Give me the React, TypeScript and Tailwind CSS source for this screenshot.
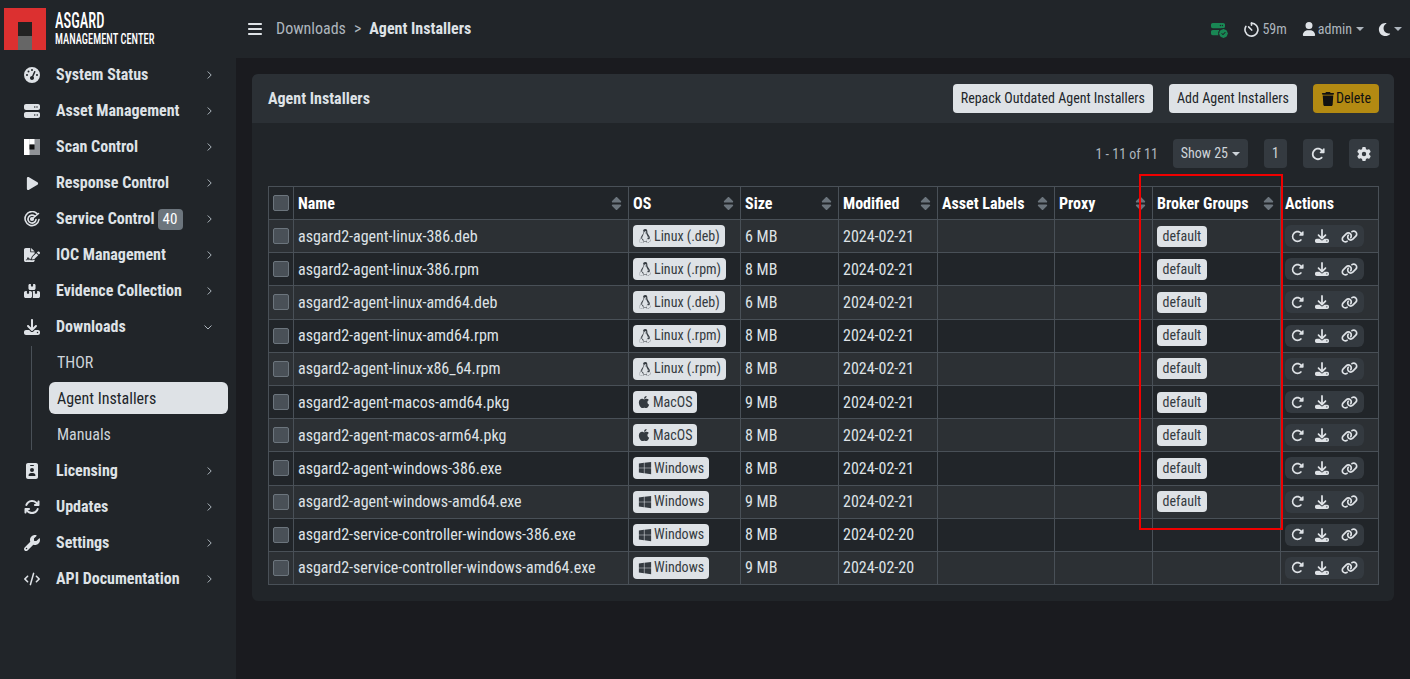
import React from "react";
import {
  FaGaugeHigh, FaServer, FaPlay, FaFileSignature, FaBoxesStacked, FaDownload, FaIdBadge,
  FaArrowsRotate, FaWrench, FaCode, FaRotateRight, FaLink, FaLinux, FaApple, FaWindows,
  FaUser, FaMoon, FaTrash, FaGear, FaBars, FaSort, FaCircleCheck,
} from "react-icons/fa6";

const font = { fontFamily: "Roboto, sans-serif" };

function ScanIcon() {
  return (
    <svg width="16" height="16" viewBox="0 0 16 16">
      <rect width="16" height="16" fill="#8f9296" />
      <rect width="5.5" height="16" fill="#fff" />
      <rect x="5.5" width="5" height="5.5" fill="#fff" />
      <rect x="5.5" y="5.5" width="5" height="5" fill="#111" />
    </svg>
  );
}

function RadarIcon() {
  return (
    <svg width="16" height="16" viewBox="0 0 16 16" fill="none" stroke="currentColor" strokeWidth="1.6" strokeLinecap="round">
      <path d="M13 2.6A7 7 0 1 0 15 8.5" />
      <path d="M10.8 5.2A4 4 0 1 0 12 8.6" />
      <circle cx="8" cy="8" r="1.3" fill="currentColor" />
      <path d="M8 8l6.5-5.5" />
    </svg>
  );
}

function TimerIcon() {
  return (
    <svg width="15" height="15" viewBox="0 0 16 16" fill="none" stroke="currentColor" strokeWidth="1.7" strokeLinecap="round" strokeLinejoin="round">
      <path d="M8 1.2A6.9 6.9 0 1 1 2 4.6" />
      <path d="M8 1.2V3.4" />
      <path d="M8.2 8.6 4.9 5.2" />
    </svg>
  );
}

function Chevron({ open }: { open?: boolean }) {
  if (open) {
    return (
      <svg width="8" height="5" viewBox="0 0 8 5" fill="none" stroke="currentColor" strokeWidth="1">
        <path d="M.5.5 4 4 7.5.5" />
      </svg>
    );
  }
  return (
    <svg width="5" height="8" viewBox="0 0 5 8" fill="none" stroke="currentColor" strokeWidth="1">
      <path d="M.7.5 4.2 4 .7 7.5" />
    </svg>
  );
}

const navTop = [
  { label: "System Status", icon: <FaGaugeHigh size={16} /> },
  { label: "Asset Management", icon: <FaServer size={16} /> },
  { label: "Scan Control", icon: <ScanIcon /> },
  { label: "Response Control", icon: <FaPlay size={15} /> },
  { label: "Service Control", icon: <RadarIcon />, badge: "40" },
  { label: "IOC Management", icon: <FaFileSignature size={18} /> },
  { label: "Evidence Collection", icon: <FaBoxesStacked size={18} /> },
];

const navBottom = [
  { label: "Licensing", icon: <FaIdBadge size={16} /> },
  { label: "Updates", icon: <FaArrowsRotate size={16} /> },
  { label: "Settings", icon: <FaWrench size={16} /> },
  { label: "API Documentation", icon: <FaCode size={20} /> },
];

const rows = [
  ["asgard2-agent-linux-386.deb", "linux", "Linux (.deb)", "6 MB", "2024-02-21", true],
  ["asgard2-agent-linux-386.rpm", "linux", "Linux (.rpm)", "8 MB", "2024-02-21", true],
  ["asgard2-agent-linux-amd64.deb", "linux", "Linux (.deb)", "6 MB", "2024-02-21", true],
  ["asgard2-agent-linux-amd64.rpm", "linux", "Linux (.rpm)", "8 MB", "2024-02-21", true],
  ["asgard2-agent-linux-x86_64.rpm", "linux", "Linux (.rpm)", "8 MB", "2024-02-21", true],
  ["asgard2-agent-macos-amd64.pkg", "mac", "MacOS", "9 MB", "2024-02-21", true],
  ["asgard2-agent-macos-arm64.pkg", "mac", "MacOS", "8 MB", "2024-02-21", true],
  ["asgard2-agent-windows-386.exe", "win", "Windows", "8 MB", "2024-02-21", true],
  ["asgard2-agent-windows-amd64.exe", "win", "Windows", "9 MB", "2024-02-21", true],
  ["asgard2-service-controller-windows-386.exe", "win", "Windows", "8 MB", "2024-02-20", false],
  ["asgard2-service-controller-windows-amd64.exe", "win", "Windows", "9 MB", "2024-02-20", false],
] as const;

function NavItem({ label, icon, badge, open }: { label: string; icon: React.ReactNode; badge?: string; open?: boolean }) {
  return (
    <div className="flex h-9 items-center pl-[24px] pr-[24px] text-[#dee2e6]">
      <span className="flex w-[16px] justify-center">{icon}</span>
      <span className="ml-[16px] text-[16px] font-bold whitespace-nowrap [font-stretch:75%]">{label}</span>
      {badge && <span className="ml-[3px] w-[25px] rounded-[4px] bg-[#6c757d] text-center text-[15px] leading-[21px] [font-stretch:75%] text-white">{badge}</span>}
      <span className="ml-auto text-[#adb5bd]">
        <Chevron open={open} />
      </span>
    </div>
  );
}

function OsIcon({ os }: { os: string }) {
  if (os === "linux") return <FaLinux size={14} className="-mr-px" />;
  if (os === "mac") return <FaApple size={14} className="-mx-px" />;
  return <FaWindows size={14} className="-mr-px" />;
}

function Th({ children, className, sort = true }: { children?: React.ReactNode; className: string; sort?: boolean }) {
  return (
    <th className={`border border-[#495057] px-1 text-left align-middle text-[16px] font-bold text-white [font-stretch:75%] ${className}`}>
      <div className="flex items-center justify-between">
        <span className="pt-px whitespace-nowrap">{children}</span>
        {sort && <FaSort size={15} className="text-[#6c757d]" />}
      </div>
    </th>
  );
}

export default function App() {
  return (
    <div className="flex h-[679px] overflow-hidden bg-[#1a1b1f] text-[#dee2e6]" style={font}>
      <aside className="w-[236px] shrink-0 bg-[#212529]">
        <div className="flex h-[57px] items-start pl-1 pt-2">
          <div className="relative h-[42px] w-[42px] shrink-0 bg-[#dc3030]">
            <div className="absolute bottom-0 left-[14px] h-[28px] w-[14px] bg-[linear-gradient(#222_50%,#666_50%)]" />
          </div>
          <div className="ml-[9px] pt-[2px] font-medium text-white [font-stretch:75%]">
            <div className="origin-left scale-x-[0.66] text-[22px] leading-[22px]">ASGARD</div>
            <div className="origin-left scale-x-[0.7] text-[15px] leading-[15px] whitespace-nowrap">MANAGEMENT CENTER</div>
          </div>
        </div>
        {navTop.map((n) => <NavItem key={n.label} {...n} />)}
        <NavItem label="Downloads" icon={<FaDownload size={16} />} open />
        <div className="relative pl-[49px] pr-2 text-[16px] [font-stretch:75%]">
          <div className="absolute bottom-[3px] left-[31px] top-px w-px bg-[#495057]" />
          <div className="flex h-9 items-center pl-2 text-[#ced4da]">THOR</div>
          <div className="mb-[3px] mt-px flex h-8 items-center rounded-[6px] bg-[#dee2e6] pl-2 pt-px text-[#212529]">Agent Installers</div>
          <div className="flex h-9 items-center pl-2 text-[#ced4da]">Manuals</div>
        </div>
        {navBottom.map((n) => <NavItem key={n.label} {...n} />)}
      </aside>

      <div className="flex min-w-0 flex-1 flex-col">
        <header className="flex h-[58px] shrink-0 items-center bg-[#212529] pl-[11px] pr-[8px] text-[16px] [font-stretch:75%]">
          <FaBars size={16} className="text-[#dee2e6]" />
          <span className="ml-[13px] text-[#adb5bd]">Downloads</span>
          <span className="mx-[8px] text-[#adb5bd]">&gt;</span>
          <span className="font-bold text-[#dee2e6]">Agent Installers</span>
          <div className="ml-auto flex items-center text-[14px] text-[#adb5bd]">
            <span className="relative mr-[19px] text-[#198754]">
              <FaServer size={14} />
              <FaCircleCheck size={9} className="absolute -bottom-[2px] -right-[3px] rounded-full bg-[#212529] outline outline-1 outline-[#212529]" />
            </span>
            <span className="mr-[3px] text-[#dee2e6]"><TimerIcon /></span>
            <span>59m</span>
            <FaUser size={14} className="ml-[15px] mr-[2px] text-[#dee2e6]" />
            <span>admin</span>
            <span className="ml-1 h-0 w-0 border-x-[4px] border-t-[4px] border-x-transparent border-t-[#adb5bd]" />
            <FaMoon size={15} className="ml-[13px] text-[#dee2e6]" />
            <span className="ml-[2px] h-0 w-0 border-x-[4px] border-t-[4px] border-x-transparent border-t-[#adb5bd]" />
          </div>
        </header>

        <main className="p-4">
          <section className="overflow-hidden rounded-[6px] bg-[#212529]">
            <div className="flex h-[49px] items-center bg-[#2b3035] pl-4 pr-[15px] [font-stretch:75%]">
              <h2 className="text-[16px] font-bold text-[#dee2e6]">Agent Installers</h2>
              <button className="ml-auto h-[29px] rounded-[4px] bg-[#dee2e6] px-2 text-[14px] text-[#212529]">Repack Outdated Agent Installers</button>
              <button className="ml-4 h-[29px] rounded-[4px] bg-[#dee2e6] px-2 text-[14px] text-[#212529]">Add Agent Installers</button>
              <button className="ml-4 flex h-[29px] w-[66px] items-center justify-center rounded-[4px] bg-[#b38a12] text-[14px] text-[#111]">
                <FaTrash size={14} className="mr-px" />Delete
              </button>
            </div>
            <div className="px-4 pb-4 pt-4">
              <div className="-mr-px mb-[18px] flex h-[29px] items-center justify-end text-[14px] [font-stretch:75%] text-[#adb5bd]">
                <span className="pt-px">1 - 11 of 11</span>
                <button className="ml-[15px] flex h-[29px] items-center rounded-[4px] bg-[#343a40] px-2 text-[#ced4da]">
                  Show 25
                  <span className="ml-1 h-0 w-0 border-x-[4px] border-t-[4px] border-x-transparent border-t-[#ced4da]" />
                </button>
                <button className="ml-4 h-[29px] w-[23px] rounded-[4px] bg-[#343a40] text-[#ced4da]">1</button>
                <button className="ml-4 flex h-[29px] w-[30px] items-center justify-center rounded-[4px] bg-[#343a40] text-[#dee2e6]"><FaRotateRight size={14} /></button>
                <button className="ml-4 flex h-[29px] w-[30px] items-center justify-center rounded-[4px] bg-[#343a40] text-[#dee2e6]"><FaGear size={14} /></button>
              </div>
              <div className="relative">
                <table className="w-full table-fixed border-collapse">
                  <thead>
                    <tr className="h-[33px]">
                      <th className="w-[25px] border border-[#495057] p-0">
                        <span className="mx-auto block h-4 w-4 rounded-[2px] border border-[#6c757d] bg-[#495057]" />
                      </th>
                      <Th className="w-[335px]">Name</Th>
                      <Th className="w-[112px]">OS</Th>
                      <Th className="w-[98px]">Size</Th>
                      <Th className="w-[99px]">Modified</Th>
                      <Th className="w-[117px]">Asset Labels</Th>
                      <Th className="w-[98px]">Proxy</Th>
                      <Th className="w-[128px]">Broker Groups</Th>
                      <Th className="w-[98px]" sort={false}>Actions</Th>
                    </tr>
                  </thead>
                  <tbody className="text-[16px] [font-stretch:75%]">
                    {rows.map((r, i) => (
                      <tr key={r[0]} className={`h-[33.2px] ${i % 2 === 0 ? "bg-[#2c3034]" : "bg-[#212529]"}`}>
                        <td className="border border-[#495057] p-0">
                          <span className="mx-auto block h-4 w-4 rounded-[2px] border border-[#6c757d] bg-[#495057]" />
                        </td>
                        <td className="border border-[#495057] px-1 pt-px whitespace-nowrap text-[#dee2e6]">{r[0]}</td>
                        <td className="border border-[#495057] px-1 py-0">
                          <span className="flex h-[22px] w-fit items-center gap-[3px] rounded-[4px] bg-[#dee2e6] px-[5px] text-[14px] text-[#343a40]">
                            <OsIcon os={r[1]} />{r[2]}
                          </span>
                        </td>
                        <td className="border border-[#495057] px-1 pt-px text-[#dee2e6]">{r[3]}</td>
                        <td className="border border-[#495057] px-1 pt-px text-[#dee2e6]">{r[4]}</td>
                        <td className="border border-[#495057]" />
                        <td className="border border-[#495057]" />
                        <td className="border border-[#495057] px-1 py-0">
                          {r[5] && <span className="flex h-[21px] w-fit items-center rounded-[4px] bg-[#dee2e6] px-[5.5px] text-[14px] text-[#343a40]">default</span>}
                        </td>
                        <td className="border border-[#495057] px-1 py-0">
                          <span className="flex h-[22px] w-[79px] items-center rounded-[6px] bg-[#343a40] pl-[6px] text-[#dee2e6]">
                            <FaRotateRight size={13} />
                            <FaDownload size={14} className="ml-[11px]" />
                            <FaLink size={17} className="ml-[12px]" />
                          </span>
                        </td>
                      </tr>
                    ))}
                  </tbody>
                </table>
                <div className="pointer-events-none absolute left-[871px] top-[-12px] h-[356px] w-[144px] border-2 border-[#f00000]" />
              </div>
            </div>
          </section>
        </main>
      </div>
    </div>
  );
}
